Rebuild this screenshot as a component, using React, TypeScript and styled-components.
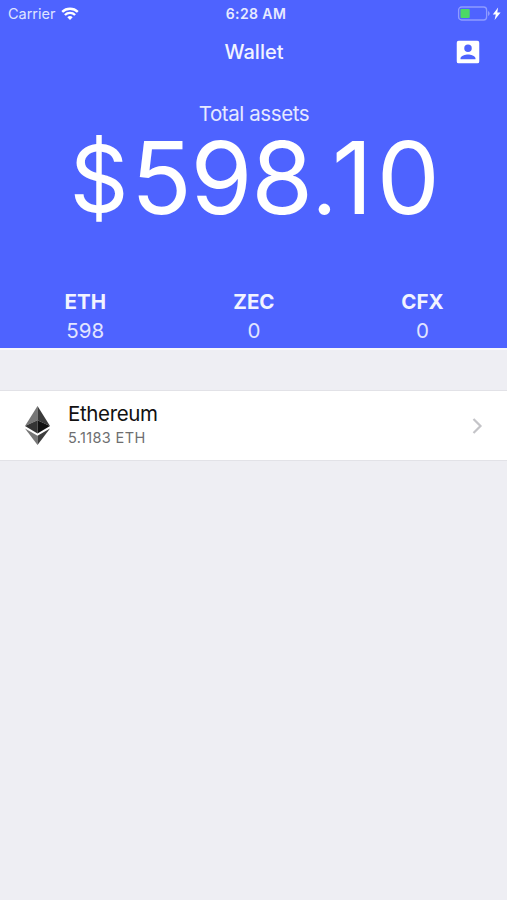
import React from "react";
import styled, { createGlobalStyle } from "styled-components";

const GlobalStyle = createGlobalStyle`
  * { box-sizing: border-box; }
  body { margin: 0; background: #eeeef3; font-family: Inter, "Liberation Sans", sans-serif; }
`;

const Screen = styled.div`
  width: 507px;
  height: 900px;
  background: #eeeef3;
  overflow: hidden;
`;

const Header = styled.header`
  height: 348px;
  background: #4e63ff;
  color: #fff;
  display: flex;
  flex-direction: column;
`;

const Bar = styled.div<{ $height: number; $shift?: number }>`
  height: ${(p) => p.$height}px;
  flex: none;
  display: grid;
  grid-template-columns: 1fr auto 1fr;
  align-items: center;

  > :nth-child(2) {
    padding-left: ${(p) => p.$shift ?? 0}px;
  }
`;

const Cell = styled.div<{ $end?: boolean; $pad: number }>`
  display: flex;
  align-items: center;
  justify-content: ${(p) => (p.$end ? "flex-end" : "flex-start")};
  padding: ${(p) => (p.$end ? `0 ${p.$pad}px 0 0` : `0 0 0 ${p.$pad}px`)};
`;

const Label = styled.span<{ $size: number; $weight?: number; $line: number; $track?: number; $color?: string }>`
  display: block;
  white-space: nowrap;
  font-size: ${(p) => p.$size}px;
  font-weight: ${(p) => p.$weight ?? 400};
  line-height: ${(p) => p.$line}px;
  letter-spacing: ${(p) => p.$track ?? 0}px;
  color: ${(p) => p.$color ?? "inherit"};
`;

const WifiIcon = styled.svg`
  margin-left: 6px;
`;

const Total = styled.div`
  height: 207px;
  padding: 23px 0 0 1px;
  display: flex;
  flex-direction: column;
  align-items: center;
`;

const Amount = styled.div`
  font-size: 100px;
  line-height: 101px;
  letter-spacing: -1.2px;
  white-space: nowrap;
`;

const Currency = styled.span`
  font-size: 92px;
  line-height: 0;
  letter-spacing: 2.5px;
  vertical-align: 2px;
`;

const Point = styled.span`
  font-size: 86px;
  line-height: 0;
  letter-spacing: -4.8px;
`;

const One = styled.span`
  letter-spacing: 4px;
`;

const Coins = styled.div`
  display: grid;
  grid-template-columns: repeat(3, 168.6px);
  justify-items: center;
  padding-left: 1px;
`;

const Coin = styled.div`
  display: flex;
  flex-direction: column;
  align-items: center;
`;

const Edge = styled.div`
  height: 2px;
  background: #f7f7fb;
`;

const Row = styled.button`
  width: 100%;
  height: 71px;
  margin-top: 40px;
  padding: 0 24px;
  display: flex;
  align-items: center;
  border: solid #e2e2e7;
  border-width: 1px 0;
  background: #fff;
  text-align: left;
  font-family: inherit;
`;

const RowText = styled.div`
  flex: 1;
  margin-left: 17px;
  padding-bottom: 2px;
`;

const coins = [
  { code: "ETH", value: "598" },
  { code: "ZEC", value: "0" },
  { code: "CFX", value: "0" },
];

export default function App() {
  return (
    <Screen>
      <GlobalStyle />
      <Header>
        <Bar $height={27} $shift={5}>
          <Cell $pad={8}>
            <Label $size={14.5} $line={20} $track={-0.02} $color="#dfe3ff">Carrier</Label>
            <WifiIcon width="18" height="14" viewBox="0 0 18 14" fill="none" stroke="#fff" strokeWidth="2.4">
              <path d="M1.2 4.9a11.3 11.3 0 0 1 15.6 0" />
              <path d="M3.9 8a7.3 7.3 0 0 1 10.2 0" />
              <path d="M9 13 6.3 10.3a3.8 3.8 0 0 1 5.4 0Z" fill="#fff" stroke="none" />
            </WifiIcon>
          </Cell>
          <Label $size={14} $weight={600} $line={20} $track={0.4} $color="#e8ebff">6:28 AM</Label>
          <Cell $end $pad={5}>
            <svg width="45" height="16" viewBox="0 0 45 16" fill="none">
              <rect x="1.6" y="1" width="28" height="13" rx="3" stroke="#8f9cff" strokeWidth="1.3" />
              <rect x="3.5" y="2.9" width="9.2" height="9.2" rx="1" fill="#4cd964" />
              <path d="M31 5q1.7.6 1.7 2.5T31 10Z" fill="#8f9cff" />
              <path d="M41.1 1.5 35.8 8.5h3l-1.2 5.4 6-7.4h-3.3Z" fill="#fff" />
            </svg>
          </Cell>
        </Bar>
        <Bar $height={50} $shift={1}>
          <span />
          <Label $size={20} $weight={550} $line={26} $color="#f2f3ff">Wallet</Label>
          <Cell $end $pad={24}>
            <svg width="30" height="30" viewBox="0 0 24 24" fill="#fff">
              <path fillRule="evenodd" d="M4.5 3h15A1.5 1.5 0 0 1 21 4.5v15a1.5 1.5 0 0 1-1.5 1.5h-15A1.5 1.5 0 0 1 3 19.5v-15A1.5 1.5 0 0 1 4.5 3ZM12 6a3 3 0 1 0 0 6 3 3 0 0 0 0-6ZM6 17v.7h12V17c0-2-4-3.1-6-3.1S6 15 6 17Z" />
            </svg>
          </Cell>
        </Bar>
        <Total>
          <Label $size={20.5} $line={27} $track={-0.4} $color="#e6e9ff">Total assets</Label>
          <Amount>
            <Currency>$</Currency>598<Point>.</Point><One>1</One>0
          </Amount>
        </Total>
        <Coins>
          {coins.map((coin) => (
            <Coin key={coin.code}>
              <Label $size={20.5} $weight={650} $line={36} $color="#f2f3ff">{coin.code}</Label>
              <Label $size={20.5} $line={22} $color="#e2e5ff">{coin.value}</Label>
            </Coin>
          ))}
        </Coins>
      </Header>
      <Edge />
      <Row>
        <svg width="27" height="40" viewBox="0 0 27 40">
          <path d="M13.5 0 1 20l12.5-5.7Z" fill="#777" />
          <path d="M13.5 0 26 20l-12.5-5.7Z" fill="#3b3b3b" />
          <path d="M1 20l12.5-5.7V27.5Z" fill="#343434" />
          <path d="M26 20l-12.5-5.7V27.5Z" fill="#111" />
          <path d="M1 22.5l12.5 7.3V39Z" fill="#777" />
          <path d="M26 22.5l-12.5 7.3V39Z" fill="#3d3d3d" />
        </svg>
        <RowText>
          <Label $size={20.5} $line={26} $track={-0.35} $color="#111">Ethereum</Label>
          <Label $size={14.5} $line={22} $track={0.35} $color="#6e6e70">5.1183 ETH</Label>
        </RowText>
        <svg width="11" height="18" viewBox="0 0 11 18" fill="none" stroke="#c4c4c8" strokeWidth="2.2">
          <path d="m1.5 2 7 7-7 7" />
        </svg>
      </Row>
    </Screen>
  );
}
